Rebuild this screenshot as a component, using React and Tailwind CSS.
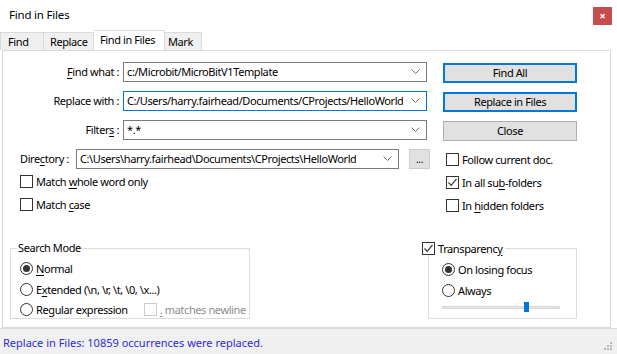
import React from 'react';

const Chevron = () => (
  <svg width="9" height="6" viewBox="0 0 9 6" className="shrink-0">
    <path d="M0.5 0.5 L4.5 4.5 L8.5 0.5" fill="none" stroke="#6d6d6d" strokeWidth="1" />
  </svg>
);

function Combo({ value, width, focused }) {
  return (
    <div
      className={`flex h-[20px] items-center justify-between border bg-white pl-[3px] pr-[6px] ${
        focused ? 'border-[#0078d7]' : 'border-[#7a7a7a]'
      } ${width}`}
    >
      <span className="truncate text-black">{value}</span>
      <Chevron />
    </div>
  );
}

function Check({ checked, disabled }) {
  return (
    <span
      className={`flex h-[13px] w-[13px] shrink-0 items-center justify-center border bg-white ${
        disabled ? 'border-[#cccccc]' : 'border-[#333333]'
      }`}
    >
      {checked && (
        <svg width="11" height="11" viewBox="0 0 11 11">
          <path d="M1.5 5.5 L4.2 8.3 L9.5 1.8" fill="none" stroke="#333" strokeWidth="1.2" />
        </svg>
      )}
    </span>
  );
}

function Radio({ checked }) {
  return (
    <span className="flex h-[13px] w-[13px] shrink-0 items-center justify-center rounded-full border border-[#333333] bg-white">
      {checked && <span className="h-[7px] w-[7px] rounded-full bg-[#333333]" />}
    </span>
  );
}

function Btn({ children, def }) {
  return (
    <div
      className={`flex h-[20px] w-[134px] items-center justify-center bg-[#e1e1e1] ${
        def ? 'border-2 border-[#0078d7]' : 'border border-[#adadad]'
      }`}
    >
      {children}
    </div>
  );
}

function Opt({ children, className = '' }) {
  return <div className={`flex h-[13px] items-center gap-[3px] whitespace-nowrap ${className}`}>{children}</div>;
}

const U = ({ children }) => <span className="underline underline-offset-2">{children}</span>;

export default function App() {
  return (
    <div className="flex h-[354px] w-[617px] flex-col overflow-hidden whitespace-nowrap bg-white font-['Noto_Sans',sans-serif] text-[11px] leading-[14px] tracking-[-0.4px] text-black">
      {/* title bar */}
      <div className="flex h-[30px] shrink-0 items-start justify-between pl-[9px] pr-[5px]">
        <span className="mt-[8px] text-[11.5px] tracking-[-0.2px]">Find in Files</span>
        <div className="mt-[7px] flex h-[18px] w-[19px] items-center justify-center bg-[#c94c4c] text-[11px] font-bold text-white">
          ×
        </div>
      </div>

      {/* tabs */}
      <div className="flex h-[20px] shrink-0 items-end">
        <div className="flex h-[18px] w-[44px] items-center border border-b-0 border-[#d9d9d9] bg-[#f0f0f0] pl-[7px]">Find</div>
        <div className="flex h-[18px] w-[50px] items-center border border-b-0 border-l-0 border-[#d9d9d9] bg-[#f0f0f0] pl-[6px]">Replace</div>
        <div className="flex h-[20px] w-[71px] items-start border border-b-0 border-l-0 border-[#d9d9d9] bg-white pl-[6px] pt-[2px]">Find in Files</div>
        <div className="flex h-[18px] w-[37px] items-center border border-b-0 border-l-0 border-[#d9d9d9] bg-[#f0f0f0] pl-[3px]">Mark</div>
      </div>

      {/* panel */}
      <div className="ml-[2px] flex h-[278px] w-[609px] shrink-0 flex-col border border-[#d9d9d9] bg-white">
        <div className="flex">
          {/* left column */}
          <div className="flex w-[440px] flex-col">
            <div className="mt-[11px] flex items-center">
              <span className="w-[120px] pr-[4px] text-right"><U>F</U>ind what :</span>
              <Combo value="c:/Microbit/MicroBitV1Template" width="w-[304px]" />
            </div>
            <div className="mt-[9px] flex items-center">
              <span className="w-[120px] pr-[4px] text-right">Replace with :</span>
              <Combo value="C:/Users/harry.fairhead/Documents/CProjects/HelloWorld" width="w-[304px]" focused />
            </div>
            <div className="mt-[9px] flex items-center">
              <span className="w-[120px] pr-[4px] text-right">Filter<U>s</U> :</span>
              <Combo value="*.*" width="w-[304px]" />
            </div>
            <div className="mt-[9px] flex items-center pl-[17px]">
              <span className="w-[56px]">Dire<U>c</U>tory :</span>
              <Combo value="C:\Users\harry.fairhead\Documents\CProjects\HelloWorld" width="w-[323px]" />
              <div className="ml-[10px] flex h-[20px] w-[21px] items-center justify-center border border-[#cccccc] bg-[#e1e1e1] text-[10px] leading-none">
                ...
              </div>
            </div>
            <Opt className="mt-[6px] pl-[17px]">
              <Check />
              <span>Match <U>w</U>hole word only</span>
            </Opt>
            <Opt className="mt-[10px] pl-[17px]">
              <Check />
              <span>Match <U>c</U>ase</span>
            </Opt>
          </div>

          {/* right column */}
          <div className="flex flex-col">
            <div className="mt-[12px] flex flex-col gap-[9px]">
              <Btn def>Find All</Btn>
              <Btn def>Replace in Files</Btn>
              <Btn>Close</Btn>
            </div>
            <div className="ml-[3px] mt-[12px] flex flex-col gap-[10px]">
              <Opt>
                <Check />
                <span>Follow current doc.</span>
              </Opt>
              <Opt>
                <Check checked />
                <span>In all su<U>b</U>-folders</span>
              </Opt>
              <Opt>
                <Check />
                <span>In <U>h</U>idden folders</span>
              </Opt>
            </div>
          </div>
        </div>

        {/* group boxes */}
        <div className="mt-[36px] flex">
          <div className="relative ml-[7px] flex h-[71px] w-[240px] shrink-0 flex-col border border-[#dcdcdc] pl-[9px] pt-[13px]">
            <span className="absolute left-[6px] top-[-8px] bg-white px-[1px]">Search Mode</span>
            <Opt>
              <Radio checked />
              <span><U>N</U>ormal</span>
            </Opt>
            <Opt className="mt-[8px]">
              <Radio />
              <span>E<U>x</U>tended (\n, \r, \t, \0, \x...)</span>
            </Opt>
            <Opt className="mt-[7px]">
              <Radio />
              <span>Re<U>g</U>ular expression</span>
              <span className="ml-[13px]">
                <Check disabled />
              </span>
              <span className="text-[#8d8d8d]"><U>.</U> matches newline</span>
            </Opt>
          </div>

          <div className="relative ml-[178px] flex h-[71px] w-[149px] shrink-0 flex-col border border-[#dcdcdc] pl-[13px] pt-[14px]">
            <div className="absolute left-[-7px] top-[-7px] flex h-[13px] items-center gap-[3px] bg-white pr-[2px]">
              <Check checked />
              <span>Transparenc<U>y</U></span>
            </div>
            <Opt>
              <Radio checked />
              <span>On losing focus</span>
            </Opt>
            <Opt className="mt-[8px]">
              <Radio />
              <span>Always</span>
            </Opt>
            <div className="relative mt-[9px] h-[3px] w-[118px] border border-[#d6d6d6] bg-[#e7eaea]">
              <span className="absolute left-[81px] top-[-5px] h-[10px] w-[5px] bg-[#0078d7]" />
            </div>
          </div>
        </div>
      </div>

      {/* status bar */}
      <div className="relative flex flex-1 items-center border-t border-[#dadada] bg-[#f0f0f0] pl-[3px]">
        <span className="mt-[2px] text-[11px] tracking-normal text-[#2b2bd9]">
          Replace in Files: 10859 occurrences were replaced.
        </span>
        <svg width="12" height="12" viewBox="0 0 12 12" className="absolute bottom-[1px] right-[4px]">
          <g fill="#b8b8b8">
            <rect x="9" y="1" width="2" height="2" />
            <rect x="6" y="4" width="2" height="2" />
            <rect x="9" y="4" width="2" height="2" />
            <rect x="3" y="7" width="2" height="2" />
            <rect x="6" y="7" width="2" height="2" />
            <rect x="9" y="7" width="2" height="2" />
          </g>
        </svg>
      </div>
    </div>
  );
}
